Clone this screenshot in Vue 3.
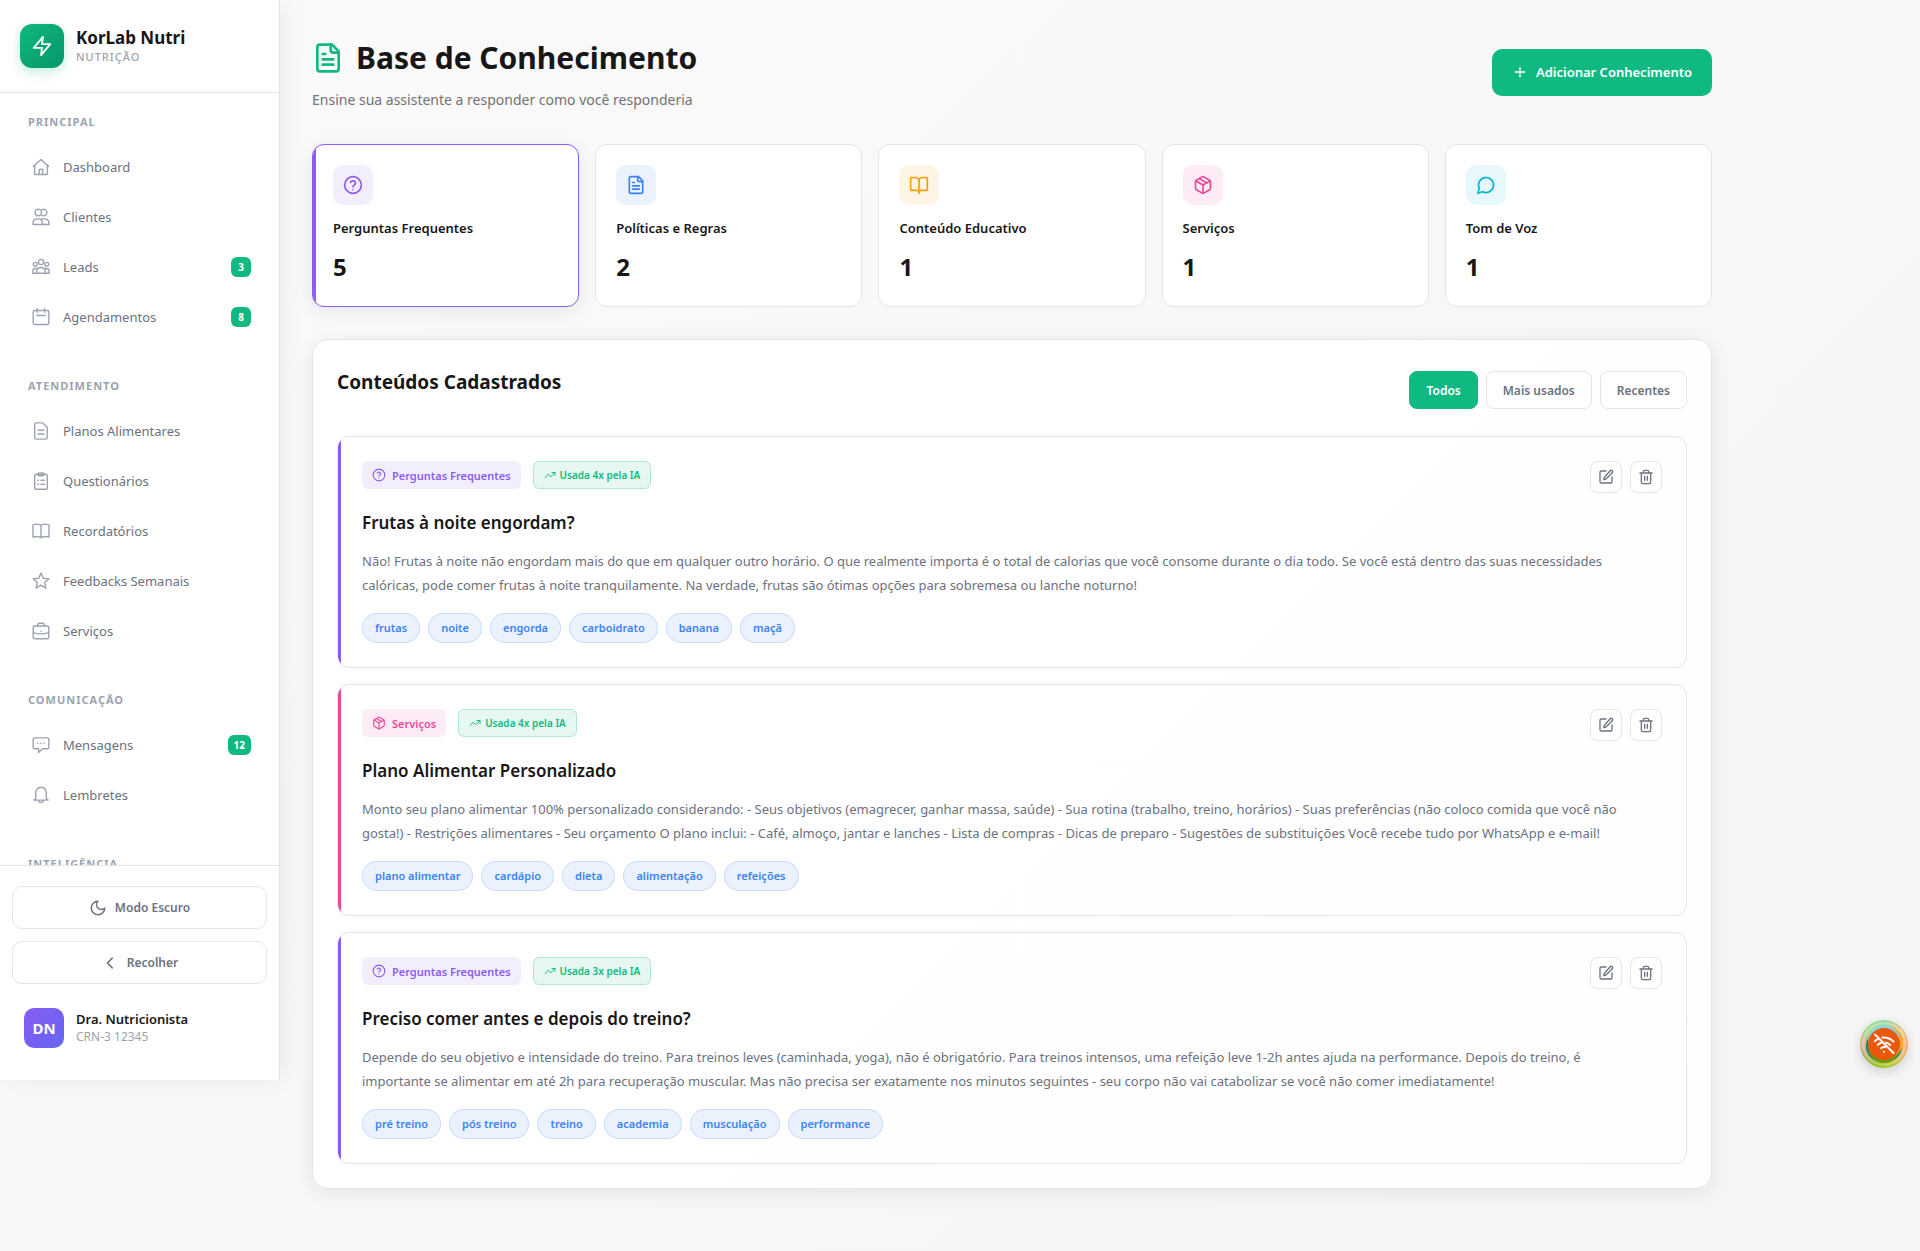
<script setup>
import { ref } from 'vue'

// Line icons on a 24 unit grid
const icons = {
  help: '<circle cx="12" cy="12" r="10"/><path d="M9.1 9a3 3 0 0 1 5.8 1c0 2-2.9 2.6-2.9 4M12 17.5h.01"/>',
  file: '<path d="M15 2H6a2 2 0 0 0-2 2v16a2 2 0 0 0 2 2h12a2 2 0 0 0 2-2V7Z"/><path d="M14 2v4a2 2 0 0 0 2 2h4M10 9H8M16 13H8M16 17H8"/>',
  book: '<path d="M12 7v15"/><path d="M3 18.5a1 1 0 0 1-1-1V4a1 1 0 0 1 1-1h5a4 4 0 0 1 4 4 4 4 0 0 1 4-4h5a1 1 0 0 1 1 1v13.500a1 1 0 0 1-1 1h-6a3 3 0 0 0-3 2 3 3 0 0 0-3-2Z"/>',
  box: '<path d="M11 21.730a2 2 0 0 0 2 0l7-4A2 2 0 0 0 21 16V8a2 2 0 0 0-1-1.730l-7-4a2 2 0 0 0-2 0l-7 4A2 2 0 0 0 3 8v8a2 2 0 0 0 1 1.730z"/><path d="M12 22V12M3.300 7 12 12l8.700-5M7.500 4.270l9 5.150"/>',
  chat: '<path d="M7.900 20A9 9 0 1 0 4 16.100L2 22Z"/>',
  trend: '<path d="m22 7-8.500 8.500-5-5L2 17"/><path d="M16 7h6v6"/>',
  edit: '<path d="M12 3H5a2 2 0 0 0-2 2v14a2 2 0 0 0 2 2h14a2 2 0 0 0 2-2v-7"/><path d="M18.400 2.600a2.100 2.100 0 0 1 3 3L12.400 14.600a2 2 0 0 1-.9.5l-2.900.8.8-2.900a2 2 0 0 1 .5-.9z"/>',
  trash: '<path d="M3 6h18M19 6v14a2 2 0 0 1-2 2H7a2 2 0 0 1-2-2V6M8 6V4a2 2 0 0 1 2-2h4a2 2 0 0 1 2 2v2M10 11v6M14 11v6"/>',
  plus: '<path d="M5 12h14M12 5v14"/>',
  moon: '<path d="M12 3a6 6 0 0 0 9 9 9 9 0 1 1-9-9Z"/>',
  left: '<path d="m15 5.500-6.500 6.500 6.500 6.500"/>',
  zap: '<path d="M13 2 3 14h9l-1 8 10-12h-9l1-8z"/>',
}

// Menu icons on an 18 unit grid
const menuIcons = {
  home: '<path d="M1.200 8.400 9 1.400l7.800 7"/><path d="M2.600 7.500v8.200c0 .5.3.8.8.8h11.200c.5 0 .8-.3.8-.8V7.500M7.200 16.400v-3.600c0-1 .5-1.500 1.200-1.500h1.200c.7 0 1.200.5 1.200 1.500v3.600"/>',
  clients: '<circle cx="6.300" cy="4.500" r="3.200"/><path d="M10.200 1.700a3.200 3.200 0 1 1 0 5.600M1 16.500v-1.300c0-2.600 1.900-4.300 4.700-4.300s4.700 1.700 4.700 4.300v1.300zM9.500 10.900h2.300c3.200 0 5.200 1.700 5.200 4.400v1.200h-6.600"/>',
  leads: '<circle cx="9" cy="4" r="2.600"/><circle cx="3.200" cy="6.300" r="1.900"/><circle cx="14.800" cy="6.300" r="1.900"/><path d="M4.700 15.200v-1.700c0-2.700 1.700-4 4.300-4s4.300 1.300 4.300 4v1.700zM4.700 15.200H.8v-2c0-1.600 1-2.700 2.700-2.700h1.200M13.300 15.200h3.900v-2c0-1.600-1-2.700-2.700-2.700h-1.200"/>',
  calendar: '<rect x="1.200" y="2.500" width="15.600" height="14" rx="1.500"/><path d="M5.300.8v3.400M12.700.8v3.400M4.700 7.500h8.600"/>',
  plan: '<path d="M4 .9h6.700l4.500 4.300v10.600c0 .8-.5 1.300-1.300 1.300H4c-.8 0-1.300-.5-1.300-1.300V2.200C2.700 1.400 3.200.9 4 .9zM6 8.200h6M6 12h6"/>',
  form: '<rect x="2.700" y="2.200" width="12.600" height="15" rx="1.500"/><rect x="6" y=".9" width="6" height="2.800" rx="1.200"/><path d="M5.800 8.300h.7M9 8.300h3.500M5.800 12.300h.7M9 12.300h3.500"/>',
  book: '<path d="M1 2.900C3.700 1.800 6.400 1.900 9 3.200c2.600-1.300 5.300-1.400 8-.3v12.200c-2.700-.9-5.400-.8-8 .4-2.600-1.200-5.300-1.300-8-.4zM9 3.200v12.300"/>',
  star: '<path d="m9 1.100 2.300 5.100 5.600.5-4.200 3.800 1.200 5.600L9 13.200l-4.900 2.900 1.200-5.600L1.100 6.700l5.600-.5z"/>',
  case: '<rect x="1.200" y="4" width="15.600" height="12.800" rx="1.500"/><path d="M5.800 4V2.600c0-.9.500-1.400 1.300-1.400h3.800c.8 0 1.300.5 1.300 1.400V4M1.400 10.600c4.800 1.600 10.400 1.600 15.200 0M9 9.300v.3"/>',
  message: '<path d="M2.600 1.900h12.800c.8 0 1.400.5 1.400 1.300v8.200c0 .8-.6 1.300-1.400 1.300h-4.900l-4 3.800v-3.800H2.600c-.8 0-1.400-.5-1.400-1.300V3.200c0-.8.6-1.300 1.400-1.300zM5.600 7.300h.3M8.900 7.300h.3M12.200 7.300h.3"/>',
  bell: '<path d="M3.700 12.600V7.500C3.700 4 5.600 1.300 9 1.300s5.300 2.700 5.300 6.200v5.100l1.800 1.500H1.900zM6.600 14.200c.3 3 4.500 3 4.800 0"/>',
}

const menu = [
  { title: 'Principal', items: [
    { icon: 'home', label: 'Dashboard' },
    { icon: 'clients', label: 'Clientes' },
    { icon: 'leads', label: 'Leads', badge: 3 },
    { icon: 'calendar', label: 'Agendamentos', badge: 8 },
  ] },
  { title: 'Atendimento', items: [
    { icon: 'plan', label: 'Planos Alimentares' },
    { icon: 'form', label: 'Questionários' },
    { icon: 'book', label: 'Recordatórios' },
    { icon: 'star', label: 'Feedbacks Semanais' },
    { icon: 'case', label: 'Serviços' },
  ] },
  { title: 'Comunicação', items: [
    { icon: 'message', label: 'Mensagens', badge: 12 },
    { icon: 'bell', label: 'Lembretes' },
  ] },
  { title: 'Inteligência', items: [] },
]

const categories = [
  { id: 'faq', icon: 'help', label: 'Perguntas Frequentes', count: 5 },
  { id: 'rules', icon: 'file', label: 'Políticas e Regras', count: 2 },
  { id: 'edu', icon: 'book', label: 'Conteúdo Educativo', count: 1 },
  { id: 'service', icon: 'box', label: 'Serviços', count: 1 },
  { id: 'voice', icon: 'chat', label: 'Tom de Voz', count: 1 },
]
const activeCategory = ref('faq')

const filters = ['Todos', 'Mais usados', 'Recentes']
const activeFilter = ref('Todos')

const entries = [
  {
    category: categories[0], uses: 4, title: 'Frutas à noite engordam?',
    text: 'Não! Frutas à noite não engordam mais do que em qualquer outro horário. O que realmente importa é o total de calorias que você consome durante o dia todo. Se você está dentro das suas necessidades calóricas, pode comer frutas à noite tranquilamente. Na verdade, frutas são ótimas opções para sobremesa ou lanche noturno!',
    tags: ['frutas', 'noite', 'engorda', 'carboidrato', 'banana', 'maçã'],
  },
  {
    category: categories[3], uses: 4, title: 'Plano Alimentar Personalizado',
    text: 'Monto seu plano alimentar 100% personalizado considerando: - Seus objetivos (emagrecer, ganhar massa, saúde) - Sua rotina (trabalho, treino, horários) - Suas preferências (não coloco comida que você não gosta!) - Restrições alimentares - Seu orçamento O plano inclui: - Café, almoço, jantar e lanches - Lista de compras - Dicas de preparo - Sugestões de substituições Você recebe tudo por WhatsApp e e-mail!',
    tags: ['plano alimentar', 'cardápio', 'dieta', 'alimentação', 'refeições'],
  },
  {
    category: categories[0], uses: 3, title: 'Preciso comer antes e depois do treino?',
    text: 'Depende do seu objetivo e intensidade do treino. Para treinos leves (caminhada, yoga), não é obrigatório. Para treinos intensos, uma refeição leve 1-2h antes ajuda na performance. Depois do treino, é importante se alimentar em até 2h para recuperação muscular. Mas não precisa ser exatamente nos minutos seguintes - seu corpo não vai catabolizar se você não comer imediatamente!',
    tags: ['pré treino', 'pós treino', 'treino', 'academia', 'musculação', 'performance'],
  },
]
</script>

<template>
  <div class="layout">
    <aside class="sidebar">
      <div class="brand">
        <span class="logo"><svg class="i22" viewBox="0 0 24 24" v-html="icons.zap"></svg></span>
        <div>
          <div class="brand-name">KorLab Nutri</div>
          <div class="brand-sub">NUTRIÇÃO</div>
        </div>
      </div>

      <nav class="menu">
        <section v-for="group in menu" :key="group.title" class="group">
          <h2 class="group-title">{{ group.title }}</h2>
          <a v-for="item in group.items" :key="item.label" href="#" class="menu-item">
            <svg class="menu-icon" viewBox="0 0 18 18" v-html="menuIcons[item.icon]"></svg>
            <span class="menu-label">{{ item.label }}</span>
            <span v-if="item.badge" class="count">{{ item.badge }}</span>
          </a>
        </section>
      </nav>

      <div class="side-footer">
        <button type="button" class="side-btn"><svg class="i18" viewBox="0 0 24 24" v-html="icons.moon"></svg>Modo Escuro</button>
        <button type="button" class="side-btn"><svg class="i18" viewBox="0 0 24 24" v-html="icons.left"></svg>Recolher</button>
        <div class="user">
          <span class="avatar">DN</span>
          <div>
            <div class="user-name">Dra. Nutricionista</div>
            <div class="user-sub">CRN-3 12345</div>
          </div>
        </div>
      </div>
    </aside>

    <main class="main">
      <header class="page-head">
        <div>
          <h1><svg class="i32" viewBox="0 0 24 24" v-html="icons.file"></svg>Base de Conhecimento</h1>
          <p class="subtitle">Ensine sua assistente a responder como você responderia</p>
        </div>
        <button type="button" class="add"><svg class="i16" viewBox="0 0 24 24" v-html="icons.plus"></svg>Adicionar Conhecimento</button>
      </header>

      <div class="cards">
        <button
          v-for="c in categories" :key="c.id" type="button"
          class="card" :class="[c.id, { active: c.id === activeCategory }]"
          @click="activeCategory = c.id"
        >
          <span class="card-icon"><svg class="i20" viewBox="0 0 24 24" v-html="icons[c.icon]"></svg></span>
          <span class="card-label">{{ c.label }}</span>
          <span class="card-count">{{ c.count }}</span>
        </button>
      </div>

      <section class="panel">
        <div class="panel-head">
          <h2>Conteúdos Cadastrados</h2>
          <div class="filters">
            <button
              v-for="f in filters" :key="f" type="button"
              class="filter" :class="{ on: f === activeFilter }" @click="activeFilter = f"
            >{{ f }}</button>
          </div>
        </div>

        <div class="entries">
          <article v-for="e in entries" :key="e.title" class="entry" :class="e.category.id">
            <div class="entry-head">
              <div class="badges">
                <span class="badge"><svg class="i14" viewBox="0 0 24 24" v-html="icons[e.category.icon]"></svg>{{ e.category.label }}</span>
                <span class="usage"><svg class="i12" viewBox="0 0 24 24" v-html="icons.trend"></svg>Usada {{ e.uses }}x pela IA</span>
              </div>
              <div class="actions">
                <button type="button" class="action" aria-label="Editar"><svg class="i16" viewBox="0 0 24 24" v-html="icons.edit"></svg></button>
                <button type="button" class="action" aria-label="Excluir"><svg class="i16" viewBox="0 0 24 24" v-html="icons.trash"></svg></button>
              </div>
            </div>
            <h3>{{ e.title }}</h3>
            <p class="text">{{ e.text }}</p>
            <div class="tags"><span v-for="t in e.tags" :key="t" class="tag">{{ t }}</span></div>
          </article>
        </div>
      </section>
    </main>

    <button type="button" class="offline" aria-label="Sem conexão">
      <span class="offline-core">
        <svg class="i24" viewBox="0 0 24 24"><path d="M3 2.500 21.500 21M2.800 9.200a14 14 0 0 1 3-2M10.500 5.500A14 14 0 0 1 21.500 9.500M5.800 12.800a9.500 9.500 0 0 1 3.700-2.200M14 10.600a9.500 9.500 0 0 1 4.300 2.400M9 16.200a5 5 0 0 1 4-1.200M12 19.800h.01" /></svg>
      </span>
    </button>
  </div>
</template>

<style>
body {
  background: #f7f7f7;
}
</style>

<style scoped>
* {
  box-sizing: border-box;
}
.layout {
  display: flex;
  align-items: flex-start;
  min-height: 100vh;
  background: linear-gradient(135deg, #fafafa, #f5f5f5);
  color: #171717;
  font-family: 'Noto Sans', 'Open Sans', sans-serif;
  font-size: 13px;
}
button {
  font-family: inherit;
  cursor: pointer;
}
h1, h2, h3, p {
  margin: 0;
}
svg {
  flex: none;
  fill: none;
  stroke: currentColor;
  stroke-width: 2;
  stroke-linecap: round;
  stroke-linejoin: round;
}
.i12 { width: 12px; height: 12px; }
.i14 { width: 14px; height: 14px; }
.i16 { width: 16px; height: 16px; }
.i18 { width: 18px; height: 18px; }
.i20 { width: 20px; height: 20px; }
.i22 { width: 22px; height: 22px; }
.i24 { width: 24px; height: 24px; }
.i32 { width: 32px; height: 32px; }

/* Sidebar */
.sidebar {
  display: flex;
  flex-direction: column;
  flex: none;
  position: sticky;
  top: 0;
  width: 280px;
  height: 100vh;
  max-height: 1080px;
  background: #fff;
  border-right: 1px solid #e5e5e5;
  box-shadow: 4px 0 24px rgba(0, 0, 0, 0.06);
}
.brand {
  display: flex;
  align-items: center;
  gap: 12px;
  padding: 24px 20px;
  border-bottom: 1px solid #e5e5e5;
}
.logo {
  display: flex;
  align-items: center;
  justify-content: center;
  width: 44px;
  height: 44px;
  border-radius: 12px;
  color: #fff;
  background: linear-gradient(135deg, #10b981, #059669);
  box-shadow: 0 4px 12px rgba(16, 185, 129, 0.25);
}
.brand-name {
  font-size: 17px;
  font-weight: 700;
  line-height: 22px;
}
.brand-sub {
  font-size: 11px;
  font-weight: 500;
  line-height: 16px;
  letter-spacing: 1px;
  color: #9ca3af;
}
.menu {
  flex: 1;
  min-height: 0;
  overflow: hidden;
  padding: 21px 12px 0;
}
.group {
  margin-bottom: 38px;
}
.group-title {
  margin-bottom: 14px;
  padding: 0 16px;
  font-size: 11px;
  font-weight: 700;
  line-height: 16px;
  letter-spacing: 1px;
  text-transform: uppercase;
  color: #9ca3af;
}
.menu-item {
  display: flex;
  align-items: center;
  gap: 13px;
  height: 46px;
  margin-bottom: 4px;
  padding: 0 16px 0 20px;
  color: #6b7280;
  text-decoration: none;
}
.menu-item:last-child {
  margin-bottom: 0;
}
.menu-icon {
  width: 18px;
  height: 18px;
  stroke-width: 1.4;
  color: #9ca3af;
}
.menu-label {
  flex: 1;
}
.count {
  min-width: 20px;
  padding: 0 6px;
  border-radius: 6px;
  background: #10b981;
  color: #fff;
  font-size: 10px;
  font-weight: 700;
  line-height: 20px;
  text-align: center;
}
.side-footer {
  display: flex;
  flex-direction: column;
  gap: 12px;
  padding: 20px 12px;
  border-top: 1px solid #e5e5e5;
}
.side-btn {
  display: flex;
  align-items: center;
  justify-content: center;
  gap: 8px;
  height: 43px;
  border: 1px solid #e5e5e5;
  border-radius: 10px;
  background: #fff;
  color: #6b7280;
  font-size: 12px;
  font-weight: 600;
}
.user {
  display: flex;
  align-items: center;
  gap: 12px;
  padding: 12px;
}
.avatar {
  width: 40px;
  border-radius: 10px;
  background: linear-gradient(135deg, #8b5cf6, #6366f1);
  color: #fff;
  font-size: 15px;
  font-weight: 700;
  line-height: 40px;
  text-align: center;
}
.user-name {
  font-weight: 600;
  line-height: 18px;
}
.user-sub {
  font-size: 12px;
  line-height: 18px;
  color: #9ca3af;
}

/* Page */
.main {
  flex: 1;
  min-width: 0;
  max-width: 1464px;
  padding: 32px 32px 64px;
}
.page-head {
  display: flex;
  align-items: center;
  justify-content: space-between;
  margin-bottom: 32px;
}
h1 {
  display: flex;
  align-items: center;
  gap: 12px;
  font-size: 30px;
  font-weight: 700;
  line-height: 52px;
}
h1 svg {
  color: #10b981;
}
.subtitle {
  margin-top: 4px;
  font-size: 14px;
  line-height: 24px;
  color: #737373;
}
.add {
  display: flex;
  align-items: center;
  gap: 8px;
  height: 47px;
  padding: 0 20px;
  border: 0;
  border-radius: 10px;
  background: #10b981;
  color: #fff;
  font-size: 13px;
  font-weight: 600;
}
.faq { --tone: #8b5cf6; --tint: rgba(139, 92, 246, 0.1); }
.rules { --tone: #3b82f6; --tint: rgba(59, 130, 246, 0.1); }
.edu { --tone: #f59e0b; --tint: rgba(245, 158, 11, 0.1); }
.service { --tone: #ec4899; --tint: rgba(236, 72, 153, 0.1); }
.voice { --tone: #06b6d4; --tint: rgba(6, 182, 212, 0.1); }

.cards {
  display: grid;
  grid-template-columns: repeat(5, 1fr);
  gap: 16px;
  margin-bottom: 32px;
}
.card {
  display: flex;
  flex-direction: column;
  align-items: flex-start;
  position: relative;
  overflow: hidden;
  padding: 20px;
  border: 1px solid #e5e5e5;
  border-radius: 12px;
  background: #fff;
  color: inherit;
  text-align: left;
}
.card.active {
  border-color: var(--tone);
  box-shadow: 0 4px 20px rgba(0, 0, 0, 0.08);
}
.card.active::before,
.entry::before {
  content: '';
  position: absolute;
  inset: 0 auto 0 0;
  width: 3px;
  background: var(--tone);
}
.card-icon {
  display: flex;
  align-items: center;
  justify-content: center;
  width: 40px;
  height: 40px;
  margin-bottom: 12px;
  border-radius: 10px;
  background: var(--tint);
  color: var(--tone);
}
.card-label {
  margin-bottom: 8px;
  font-size: 13px;
  font-weight: 600;
  line-height: 22px;
}
.card-count {
  font-size: 24px;
  font-weight: 700;
  line-height: 39px;
}
.panel {
  padding: 24px;
  border: 1px solid #e5e5e5;
  border-radius: 16px;
  background: linear-gradient(135deg, #fff, #fefefe);
  box-shadow: 0 4px 20px rgba(0, 0, 0, 0.08);
}
.panel-head {
  display: flex;
  justify-content: space-between;
  align-items: flex-start;
  margin-bottom: 24px;
}
.panel-head h2 {
  font-size: 19px;
  font-weight: 700;
  line-height: 36px;
}
.filters {
  display: flex;
  gap: 8px;
  padding: 7px 0 3px;
}
.filter {
  height: 38px;
  padding: 0 16px;
  border: 1px solid #e5e5e5;
  border-radius: 8px;
  background: #fff;
  color: #6b7280;
  font-size: 12px;
  font-weight: 600;
}
.filter.on {
  border-color: #10b981;
  background: #10b981;
  color: #fff;
}
.entries {
  display: flex;
  flex-direction: column;
  gap: 16px;
}
.entry {
  position: relative;
  overflow: hidden;
  padding: 24px;
  border: 1px solid #e5e5e5;
  border-radius: 12px;
}
.entry-head {
  display: flex;
  justify-content: space-between;
  align-items: flex-start;
  margin-bottom: 16px;
}
.badges {
  display: flex;
  align-items: flex-start;
  gap: 12px;
}
.badge,
.usage {
  display: flex;
  align-items: center;
  height: 28px;
  padding: 0 10px;
  border-radius: 6px;
  font-weight: 600;
}
.badge {
  gap: 6px;
  background: var(--tint);
  color: var(--tone);
  font-size: 11px;
}
.usage {
  gap: 4px;
  border: 1px solid rgba(16, 185, 129, 0.25);
  background: rgba(16, 185, 129, 0.1);
  color: #10b981;
  font-size: 10px;
}
.actions {
  display: flex;
  gap: 8px;
}
.action {
  display: flex;
  align-items: center;
  justify-content: center;
  width: 32px;
  height: 32px;
  padding: 0;
  border: 1px solid #e5e5e5;
  border-radius: 8px;
  background: #fff;
  color: #6b7280;
}
h3 {
  margin-bottom: 12px;
  font-size: 17px;
  font-weight: 600;
  line-height: 28px;
}
.text {
  padding-right: 20px;
  font-size: 13px;
  line-height: 24px;
  color: #6b7280;
}
.tags {
  display: flex;
  flex-wrap: wrap;
  gap: 8px;
  margin-top: 16px;
}
.tag {
  padding: 0 12px;
  border: 1px solid rgba(59, 130, 246, 0.2);
  border-radius: 20px;
  background: rgba(59, 130, 246, 0.1);
  color: #3b82f6;
  font-size: 11px;
  font-weight: 600;
  line-height: 28px;
}

/* Floating status */
.offline {
  display: flex;
  align-items: center;
  justify-content: center;
  position: fixed;
  right: 12px;
  top: 1020px;
  width: 48px;
  height: 48px;
  padding: 0;
  border: 0;
  border-radius: 50%;
  background:
    radial-gradient(circle, transparent 18px, rgba(255, 255, 255, 0.35) 21px, transparent 23px),
    conic-gradient(#8ed8a0, #f3c27c 60deg, #f9a86f 100deg, #d8b84a 135deg, #a8c51c 170deg, #8dbb18 200deg, #b8a96c 245deg, #d6b48c 275deg, #9ddc8c 315deg, #8ed8a0);
  box-shadow: 0 4px 12px rgba(0, 0, 0, 0.15);
}
.offline-core {
  display: flex;
  align-items: center;
  justify-content: center;
  width: 32px;
  height: 32px;
  border-radius: 50%;
  background: #ea580c;
  box-shadow: 0 -3px 0 #8fd3dc, 3px -2px 0 #f5a623, 0 3px 0 #6f9a10, 2px 2px 0 #0e7f8c, -2px 2px 0 #0e7f8c;
  color: #fff;
}
</style>
